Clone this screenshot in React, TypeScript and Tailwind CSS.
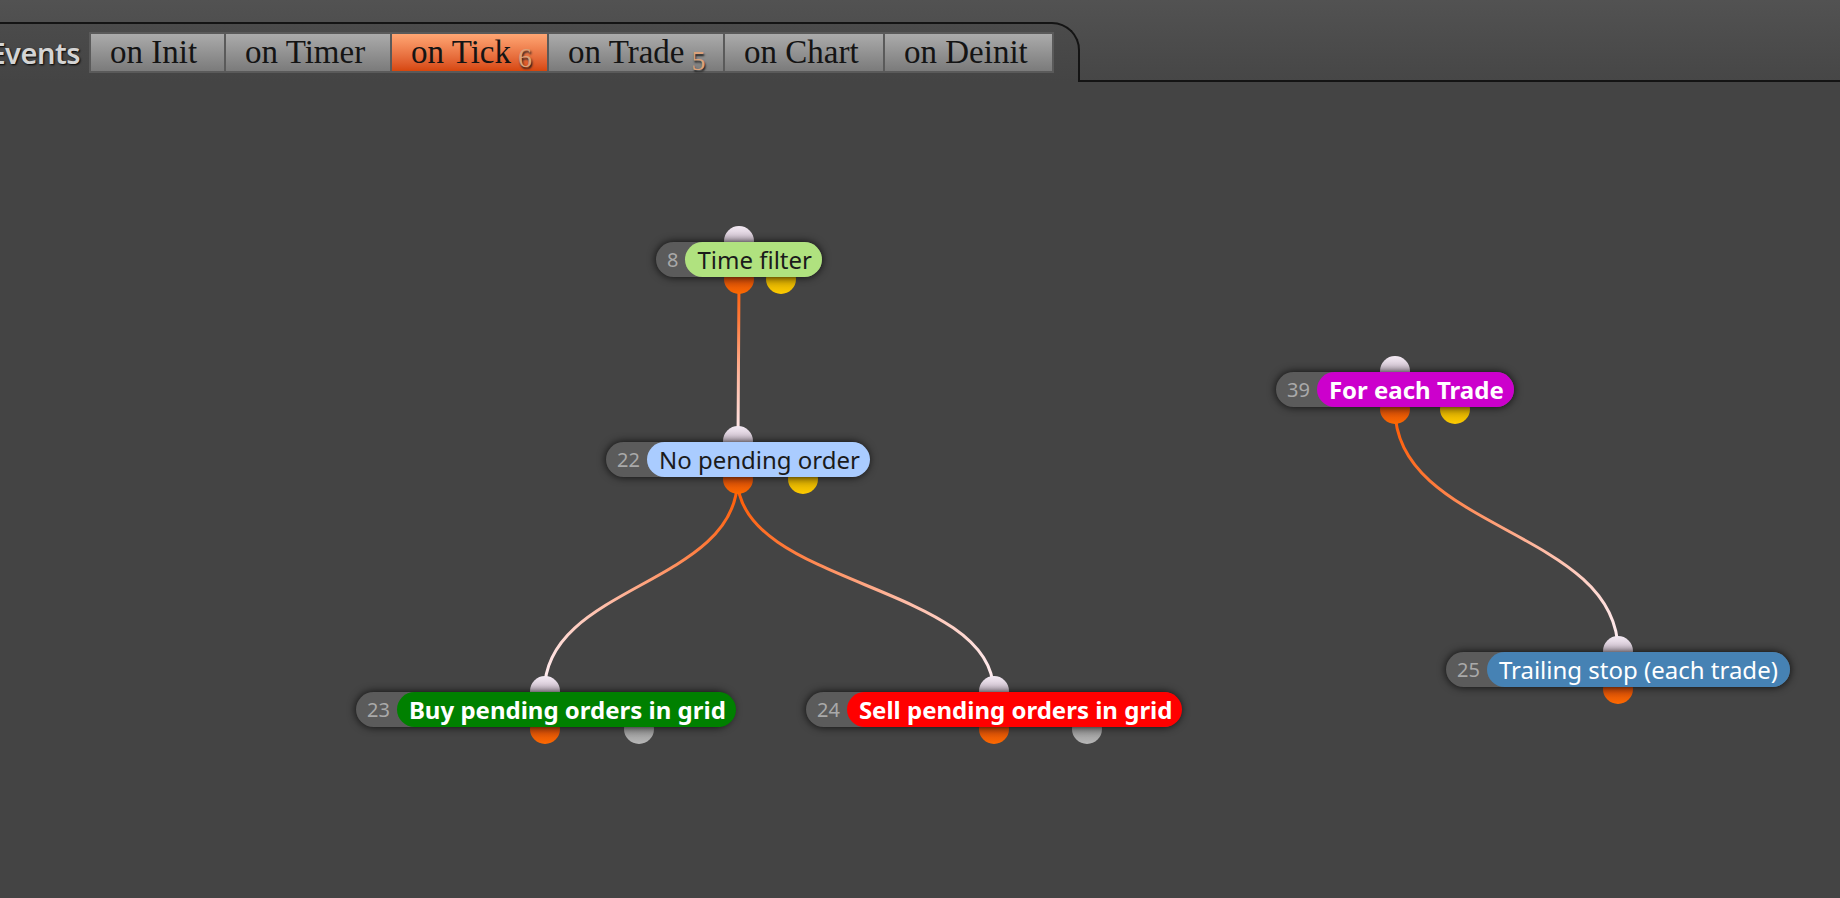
import React from "react";

type Node = {
  id: string;
  label: string;
  x: number;
  y: number;
  w: number;
  pill: string;
  text: string;
  out2: "yellow" | "gray" | null;
};

const CANVAS_TOP = 82;

const nodes: Node[] = [
  { id: "8", label: "Time filter", x: 656, y: 242, w: 166, pill: "bg-[#b0e27f]", text: "text-[#1b1b1b] font-normal", out2: "yellow" },
  { id: "22", label: "No pending order", x: 606, y: 442, w: 263, pill: "bg-[#aaccff]", text: "text-[#1b1b1b] font-normal", out2: "yellow" },
  { id: "23", label: "Buy pending orders in grid", x: 356, y: 692, w: 377, pill: "bg-[#008000]", text: "text-white font-bold", out2: "gray" },
  { id: "24", label: "Sell pending orders in grid", x: 806, y: 692, w: 375, pill: "bg-[#ff0000]", text: "text-white font-bold", out2: "gray" },
  { id: "39", label: "For each Trade", x: 1276, y: 372, w: 238, pill: "bg-[#cc00cc]", text: "text-white font-bold", out2: "yellow" },
  { id: "25", label: "Trailing stop (each trade)", x: 1446, y: 652, w: 344, pill: "bg-[#4682b4]", text: "text-white font-normal", out2: null },
];

const wires = [
  { x1: 739, y1: 279, x2: 738, y2: 441 },
  { x1: 737.5, y1: 479, x2: 544.5, y2: 691 },
  { x1: 737.5, y1: 479, x2: 993.5, y2: 691 },
  { x1: 1395, y1: 409, x2: 1618, y2: 651 },
];

const tabs = [
  { label: "on Init", w: 133 },
  { label: "on Timer", w: 164 },
  { label: "on Tick", w: 155, badge: "6", active: true },
  { label: "on Trade", w: 174, badge: "5" },
  { label: "on Chart", w: 158 },
  { label: "on Deinit", w: 167 },
];

function NodeView({ n }: { n: Node }) {
  return (
    <div className="absolute" style={{ left: n.x, top: n.y - CANVAS_TOP, width: n.w }}>
      <div className="absolute left-1/2 top-[-16px] h-[30px] w-[30px] -translate-x-1/2 rounded-full bg-linear-to-b from-[#f3e9f3] via-[#cdbfcd] to-[#7a6a7a]" />
      <div className="absolute left-1/2 top-[22px] h-[30px] w-[30px] -translate-x-1/2 rounded-full bg-linear-to-b from-[#9a3410] via-[#d24c08] to-[#ff6a00]" />
      {n.out2 === "yellow" && (
        <div className="absolute left-3/4 top-[22px] h-[30px] w-[30px] -translate-x-1/2 rounded-full bg-linear-to-b from-[#9a7a00] via-[#d4a800] to-[#ffcc00]" />
      )}
      {n.out2 === "gray" && (
        <div className="absolute left-3/4 top-[22px] h-[30px] w-[30px] -translate-x-1/2 rounded-full bg-linear-to-b from-[#707070] via-[#959595] to-[#b8b8b8]" />
      )}
      <div className="relative flex h-[35px] items-center rounded-full bg-[#5b5b5b] pl-[11px] shadow-[0_0_9px_rgba(0,0,0,0.85)] font-['Noto_Sans',sans-serif]">
        <span className="text-[20px] leading-none text-[#a9a9a9]">{n.id}</span>
        <div className={`ml-[7px] flex h-full flex-1 items-center whitespace-nowrap rounded-full pl-[12px] pr-[10px] text-[24px] leading-none ${n.pill} ${n.text}`}>
          {n.label}
        </div>
      </div>
    </div>
  );
}

export default function App() {
  return (
    <div className="flex h-[898px] w-[1840px] flex-col overflow-hidden bg-[#444444]">
      <div className="flex h-[82px] shrink-0 bg-linear-to-b from-[#525252] to-[#464646]">
        <div className="mt-[22px] flex h-[60px] w-[1080px] shrink-0 items-start rounded-tr-[28px] border-t-2 border-r-2 border-[#141414] bg-linear-to-b from-[#4b4b4b] to-[#444444] pt-[8px]">
          <div className="flex h-[41px] w-[80px] shrink-0 items-center justify-end">
            <span className="whitespace-nowrap font-['Noto_Sans',sans-serif] text-[29px] font-semibold leading-none tracking-[-0.5px] text-[#d4d4d4] [text-shadow:1px_1px_2px_#000]">
              Events
            </span>
          </div>
          <div className="ml-[9px] flex gap-[2px] bg-[#5a5a5a] p-[2px]">
            {tabs.map((t) => (
              <div
                key={t.label}
                className={`flex h-[37px] items-center whitespace-nowrap pl-[19px] font-['Liberation_Serif',serif] text-[33px] leading-none text-[#141414] ${
                  t.active
                    ? "bg-linear-to-b from-[#ffa673] to-[#d6460c]"
                    : "bg-linear-to-b from-[#ababab] to-[#7b7b7b]"
                }`}
                style={{ width: t.w }}
              >
                <span>{t.label}</span>
                {t.badge && (
                  <span
                    className={`relative ml-[7px] text-[28px] leading-none text-[#dba27a] [text-shadow:1px_2px_2px_#1a1a1a] ${
                      t.badge === "6" ? "top-[5px]" : "top-[8px]"
                    }`}
                  >
                    {t.badge}
                  </span>
                )}
              </div>
            ))}
          </div>
        </div>
        <div className="flex-1 border-b-2 border-[#141414]" />
      </div>

      <div className="relative flex-1">
        <svg className="pointer-events-none absolute inset-0" width="1840" height="816">
          <defs>
            {wires.map((w, i) => (
              <linearGradient
                key={i}
                id={`wg${i}`}
                gradientUnits="userSpaceOnUse"
                x1={w.x1}
                y1={w.y1 - CANVAS_TOP}
                x2={w.x2}
                y2={w.y2 - CANVAS_TOP}
              >
                <stop offset="0" stopColor="#ff5a00" />
                <stop offset="0.25" stopColor="#ff7a3a" />
                <stop offset="0.6" stopColor="#ffb8a0" />
                <stop offset="1" stopColor="#fff0f6" />
              </linearGradient>
            ))}
          </defs>
          {wires.map((w, i) => {
            const y1 = w.y1 - CANVAS_TOP;
            const y2 = w.y2 - CANVAS_TOP;
            const k = (y2 - y1) * 0.5;
            return (
              <path
                key={i}
                d={`M ${w.x1} ${y1} C ${w.x1} ${y1 + k}, ${w.x2} ${y2 - k}, ${w.x2} ${y2}`}
                fill="none"
                stroke={`url(#wg${i})`}
                strokeWidth={3}
              />
            );
          })}
        </svg>
        {nodes.map((n) => (
          <NodeView key={n.id} n={n} />
        ))}
      </div>
    </div>
  );
}
